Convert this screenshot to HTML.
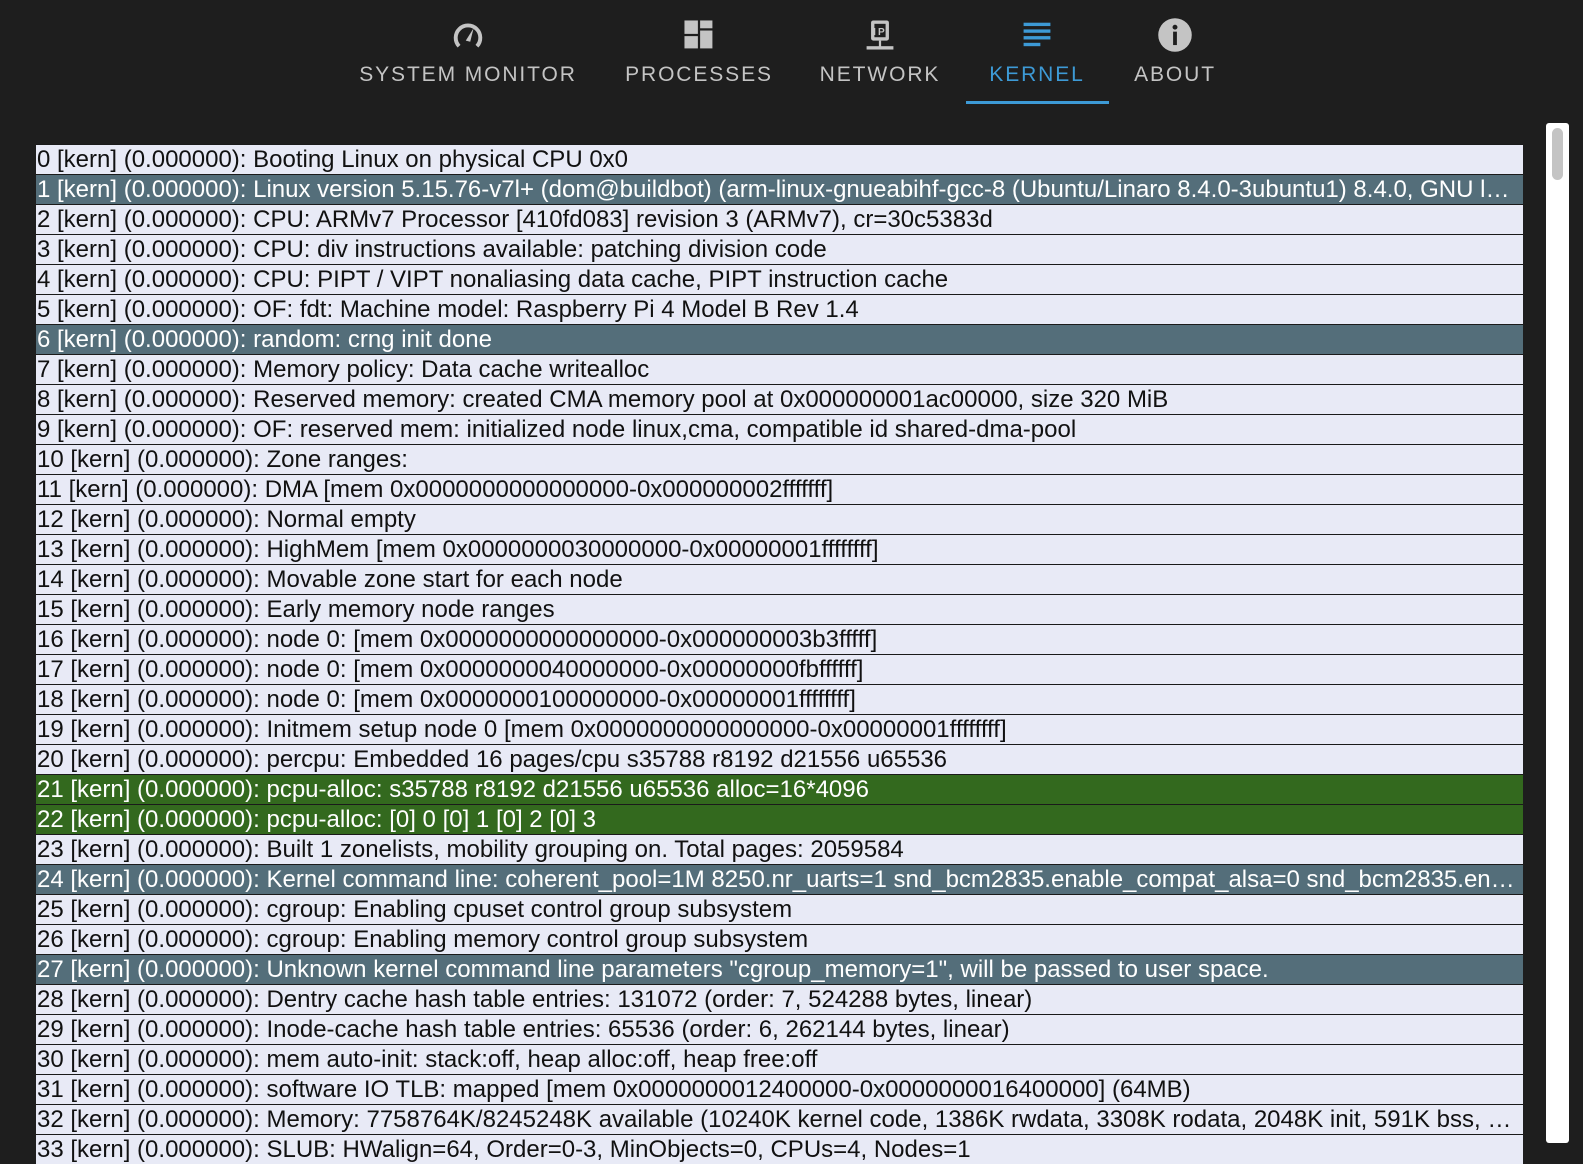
<!DOCTYPE html>
<html><head><meta charset="utf-8"><style>
body{margin:0;width:1583px;height:1139px;background:#1e1e1e;overflow:hidden;font-family:"Liberation Sans",sans-serif;position:relative}
.nav{position:absolute;top:0;left:0;width:1583px;height:110px}
.tab{position:absolute;top:0;height:105px;text-align:center;color:#c4c4c4;font-size:21px;letter-spacing:1.9px}
.tab svg{position:absolute;top:16px;left:50%;margin-left:-19px}
.tab span{position:absolute;top:63px;left:0;right:0;white-space:nowrap}
.tab.act{color:#3d9ad6}
.ul{position:absolute;left:966px;top:101px;width:143px;height:3px;background:#3d9ad6}
.list{position:absolute;left:36px;top:144px;width:1487px}
.r{height:29px;border-top:1px solid #1a1a1a;background:#e8eaf6;color:#111;font-size:24px;line-height:29px;padding-left:1px;white-space:nowrap;overflow:hidden;text-overflow:ellipsis;padding-right:8px;box-sizing:content-box;width:1478px}
.g{background:#546e7a;color:#fff}
.v{background:#33691e;color:#fff}
.sb{position:absolute;left:1546px;top:123px;width:23px;height:1020px;background:#fff;border-radius:3px}
.th{position:absolute;left:1552px;top:128px;width:11px;height:52px;background:#c4c4c4;border-radius:6px}
</style></head><body>
<div class="nav">
<div class="tab" style="left:358px;width:220px"><svg width="38" height="38" viewBox="0 0 34 34"><path d="M9 27 A11 11 0 1 1 25 27" fill="none" stroke="#c4c4c4" stroke-width="3.5"/><path d="M15 22 L22 11 L19 23 Z" fill="#c4c4c4"/></svg><span>SYSTEM MONITOR</span></div>
<div class="tab" style="left:619px;width:160px"><svg width="38" height="38" viewBox="0 0 34 34"><rect x="4" y="4" width="12" height="12" fill="#c4c4c4"/><rect x="4" y="18" width="12" height="11" fill="#c4c4c4"/><rect x="18" y="4" width="11" height="7" fill="#c4c4c4"/><rect x="18" y="13" width="11" height="16" fill="#c4c4c4"/></svg><span>PROCESSES</span></div>
<div class="tab" style="left:813px;width:134px"><svg width="38" height="38" viewBox="0 0 34 34"><rect x="9" y="4" width="16" height="18" rx="2" fill="#c4c4c4"/><rect x="12" y="7" width="10" height="12" fill="#1e1e1e"/><text x="17" y="17" font-size="9" font-weight="bold" fill="#c4c4c4" text-anchor="middle" font-family="Liberation Sans">IP</text><rect x="16" y="22" width="2" height="6" fill="#c4c4c4"/><rect x="5" y="27" width="24" height="3" fill="#c4c4c4"/></svg><span>NETWORK</span></div>
<div class="tab act" style="left:975px;width:124px"><svg width="38" height="38" viewBox="0 0 34 34"><rect x="5" y="6" width="24" height="3" fill="#3d9ad6"/><rect x="5" y="12" width="24" height="3" fill="#3d9ad6"/><rect x="5" y="18" width="24" height="3" fill="#3d9ad6"/><rect x="5" y="24" width="15" height="3" fill="#3d9ad6"/></svg><span>KERNEL</span></div>
<div class="tab" style="left:1125px;width:100px"><svg width="38" height="38" viewBox="0 0 34 34"><circle cx="17" cy="17" r="15" fill="#c4c4c4"/><circle cx="17" cy="10" r="2.2" fill="#1e1e1e"/><rect x="15.3" y="14" width="3.4" height="12" fill="#1e1e1e"/></svg><span>ABOUT</span></div>
<div class="ul"></div>
</div>
<div class="list">
<div class="r">0 [kern] (0.000000): Booting Linux on physical CPU 0x0</div>
<div class="r g">1 [kern] (0.000000): Linux version 5.15.76-v7l+ (dom@buildbot) (arm-linux-gnueabihf-gcc-8 (Ubuntu/Linaro 8.4.0-3ubuntu1) 8.4.0, GNU ld (GNU Binutils for Ubuntu) 2.34) #1597 SMP Fri Nov 4 12:14:58 GMT 2022</div>
<div class="r">2 [kern] (0.000000): CPU: ARMv7 Processor [410fd083] revision 3 (ARMv7), cr=30c5383d</div>
<div class="r">3 [kern] (0.000000): CPU: div instructions available: patching division code</div>
<div class="r">4 [kern] (0.000000): CPU: PIPT / VIPT nonaliasing data cache, PIPT instruction cache</div>
<div class="r">5 [kern] (0.000000): OF: fdt: Machine model: Raspberry Pi 4 Model B Rev 1.4</div>
<div class="r g">6 [kern] (0.000000): random: crng init done</div>
<div class="r">7 [kern] (0.000000): Memory policy: Data cache writealloc</div>
<div class="r">8 [kern] (0.000000): Reserved memory: created CMA memory pool at 0x000000001ac00000, size 320 MiB</div>
<div class="r">9 [kern] (0.000000): OF: reserved mem: initialized node linux,cma, compatible id shared-dma-pool</div>
<div class="r">10 [kern] (0.000000): Zone ranges:</div>
<div class="r">11 [kern] (0.000000): DMA [mem 0x0000000000000000-0x000000002fffffff]</div>
<div class="r">12 [kern] (0.000000): Normal empty</div>
<div class="r">13 [kern] (0.000000): HighMem [mem 0x0000000030000000-0x00000001ffffffff]</div>
<div class="r">14 [kern] (0.000000): Movable zone start for each node</div>
<div class="r">15 [kern] (0.000000): Early memory node ranges</div>
<div class="r">16 [kern] (0.000000): node 0: [mem 0x0000000000000000-0x000000003b3fffff]</div>
<div class="r">17 [kern] (0.000000): node 0: [mem 0x0000000040000000-0x00000000fbffffff]</div>
<div class="r">18 [kern] (0.000000): node 0: [mem 0x0000000100000000-0x00000001ffffffff]</div>
<div class="r">19 [kern] (0.000000): Initmem setup node 0 [mem 0x0000000000000000-0x00000001ffffffff]</div>
<div class="r">20 [kern] (0.000000): percpu: Embedded 16 pages/cpu s35788 r8192 d21556 u65536</div>
<div class="r v">21 [kern] (0.000000): pcpu-alloc: s35788 r8192 d21556 u65536 alloc=16*4096</div>
<div class="r v">22 [kern] (0.000000): pcpu-alloc: [0] 0 [0] 1 [0] 2 [0] 3</div>
<div class="r">23 [kern] (0.000000): Built 1 zonelists, mobility grouping on. Total pages: 2059584</div>
<div class="r g">24 [kern] (0.000000): Kernel command line: coherent_pool=1M 8250.nr_uarts=1 snd_bcm2835.enable_compat_alsa=0 snd_bcm2835.enable_hdmi=1 video=HDMI-A-1</div>
<div class="r">25 [kern] (0.000000): cgroup: Enabling cpuset control group subsystem</div>
<div class="r">26 [kern] (0.000000): cgroup: Enabling memory control group subsystem</div>
<div class="r g">27 [kern] (0.000000): Unknown kernel command line parameters "cgroup_memory=1", will be passed to user space.</div>
<div class="r">28 [kern] (0.000000): Dentry cache hash table entries: 131072 (order: 7, 524288 bytes, linear)</div>
<div class="r">29 [kern] (0.000000): Inode-cache hash table entries: 65536 (order: 6, 262144 bytes, linear)</div>
<div class="r">30 [kern] (0.000000): mem auto-init: stack:off, heap alloc:off, heap free:off</div>
<div class="r">31 [kern] (0.000000): software IO TLB: mapped [mem 0x0000000012400000-0x0000000016400000] (64MB)</div>
<div class="r">32 [kern] (0.000000): Memory: 7758764K/8245248K available (10240K kernel code, 1386K rwdata, 3308K rodata, 2048K init, 591K bss, 158804K reserved)</div>
<div class="r">33 [kern] (0.000000): SLUB: HWalign=64, Order=0-3, MinObjects=0, CPUs=4, Nodes=1</div>
</div>
<div class="sb"></div><div class="th"></div>
</body></html>
